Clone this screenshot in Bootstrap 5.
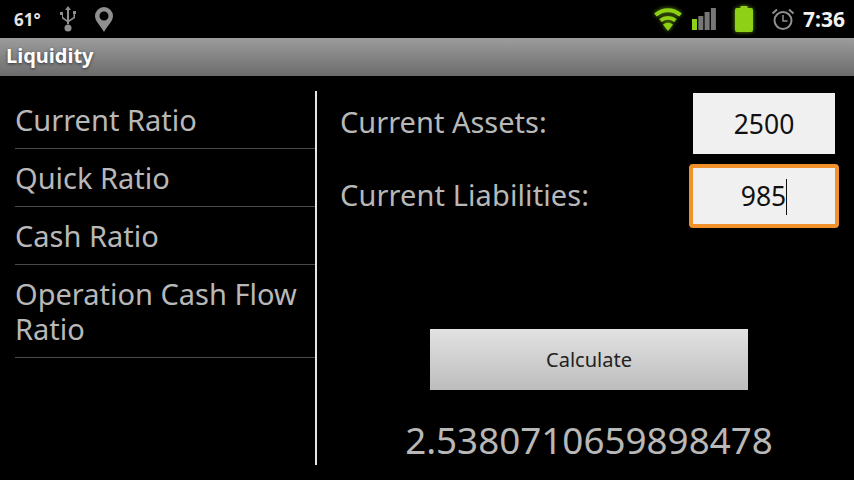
<!DOCTYPE html>
<html lang="en">
<head>
    <meta charset="UTF-8">
    <meta name="viewport" content="width=device-width, initial-scale=1.0">
    <title>Liquidity</title>
    <link href="https://cdn.jsdelivr.net/npm/bootstrap@5.3.0/dist/css/bootstrap.min.css" rel="stylesheet">
    <style>
        html, body { height: 480px; overflow: hidden; }
        body { background: #000; font-family: "Noto Sans", "Open Sans", sans-serif; color: #bdbdbd; }
        .status-strip { height: 38px; background: #000; padding: 0 9px 0 14px; }
        .temp-text { font-size: 17px; font-weight: 700; color: #e4e4e4; line-height: 1; width: 28px; }
        .clock-text { font-size: 21px; font-weight: 700; color: #f2f2f2; line-height: 1; }
        .glow-icon { filter: drop-shadow(0 0 2px rgba(142, 208, 22, .7)); }
        .signal-icon { margin: 0 3px 0 9px; }
        .batt-icon { margin: 0 18px 0 16px; }
        .title-strip { height: 38px; background: linear-gradient(#9c9c9c, #6c6c6c); padding-left: 6px; font-size: 20px; font-weight: 700; color: #fff; line-height: 36px; text-shadow: 0 1px 3px #333; }
        .app-body { height: 404px; padding: 15px 0 15px 15px; }
        .side-col { width: 300px; flex: none; }
        .side-item { font-size: 29px; line-height: 35px; padding: 11px 0 11px 0; border-bottom: 1px solid #4a4a4a; color: #b8b8b8; }
        .side-rule { width: 2px; flex: none; background: #e6e6e6; }
        .main-col { width: 537px; flex: none; }
        .form-line { padding-left: 23px; padding-right: 15px; }
        .first-line { margin-top: 2px; }
        .second-line { margin-top: 10px; }
        .form-lbl { font-size: 29px; color: #b8b8b8; line-height: 1; padding-bottom: 5px; }
        .second-line .form-lbl { padding-bottom: 3px; letter-spacing: .1px; }
        .num-box { width: 142px; height: 61px; margin-right: 4px; background: #f0f0f0; color: #111; font-size: 26.500px; border: 0; border-radius: 0; text-align: center; line-height: 63px; }
        .num-box.is-focus { width: 150px; height: 64px; margin-right: 0; border: 4px solid #f0912a; border-radius: 4px; line-height: 57px; }
        .caret-bar { display: inline-block; width: 1px; height: 36px; background: #111; vertical-align: middle; margin-top: -3px; }
        .calc-area { padding-left: 7px; padding-bottom: 6px; }
        .calc-btn { width: 318px; height: 61px; background: linear-gradient(#e2e2e2, #bdbdbd); color: #222; font-size: 20px; border: 0; border-radius: 0; padding: 0; }
        .calc-btn:hover { background: linear-gradient(#e2e2e2, #bdbdbd); color: #222; }
        .result-text { font-size: 36.800px; color: #b8b8b8; line-height: 1; margin-top: 32px; }
    </style>
</head>
<body>
    <!-- status bar -->
    <div class="status-strip d-flex align-items-center">
        <span class="temp-text me-3">61°</span>
        <svg class="me-3" width="20" height="26" viewBox="0 0 20 26"><g fill="#8f8f8f"><path d="M10 0l3 4h-2v14h-2V4H7z"/><circle cx="10" cy="22" r="3.5"/><path d="M2 6h3v3.5l0 1.5 4 3v2l-5-3.500V9H2zM15 5h3v3h-1v4l-6 4v-2l4.500-3V8H15z"/></g></svg>
        <svg width="20" height="26" viewBox="0 0 20 26"><path fill="#8f8f8f" fill-rule="evenodd" d="M10 1a9 9 0 0 1 9 9c0 5-5 9-9 16C6 19 1 15 1 10a9 9 0 0 1 9-9zm0 4.500a4.500 4.500 0 1 0 0 9 4.500 4.500 0 0 0 0-9z"/></svg>
        <div class="ms-auto d-flex align-items-center">
            <svg class="glow-icon" width="30" height="24" viewBox="0 0 30 24"><g fill="none" stroke="#8ed016" stroke-width="4"><path d="M2.500 8C10 1.500 20 1.500 27.500 8"/><path d="M7.500 13.500C12 10 18 10 22.500 13.500"/></g><path fill="#8ed016" d="M15 24l-5-6.500c3-2.500 7-2.500 10 0z"/></svg>
            <svg class="signal-icon" width="24" height="22" viewBox="0 0 24 22"><rect x="0" y="11" width="5" height="11" fill="#8ed016"/><rect x="6.300" y="8" width="5" height="14" fill="#777"/><rect x="12.600" y="4" width="5" height="18" fill="#777"/><rect x="18.900" y="0" width="5" height="22" fill="#777"/></svg>
            <svg class="glow-icon batt-icon" width="18" height="26" viewBox="0 0 18 26"><path fill="#8ed016" d="M5.500 0h7v2h3.500a2 2 0 0 1 2 2v20a2 2 0 0 1-2 2H2a2 2 0 0 1-2-2V4a2 2 0 0 1 2-2h3.500z"/></svg>
            <svg width="24" height="24" viewBox="0 0 24 24"><g fill="none" stroke="#8f8f8f"><circle cx="12" cy="13.500" r="8.500" stroke-width="2"/><path stroke-width="1.500" d="M12 8v6h4.500"/><path stroke-width="2" d="M1.500 6.500L6 2.500M22.500 6.500L18 2.500"/></g></svg>
            <span class="clock-text ms-2">7:36</span>
        </div>
    </div>

    <!-- title bar -->
    <div class="title-strip">Liquidity</div>

    <div class="app-body d-flex">
        <!-- ratio list -->
        <div class="side-col">
            <div class="side-item">Current Ratio</div>
            <div class="side-item">Quick Ratio</div>
            <div class="side-item">Cash Ratio</div>
            <div class="side-item">Operation Cash Flow Ratio</div>
        </div>
        <div class="side-rule"></div>

        <!-- calculator -->
        <div class="main-col d-flex flex-column">
            <div class="form-line first-line d-flex align-items-center justify-content-between">
                <span class="form-lbl">Current Assets:</span>
                <div class="num-box">2500</div>
            </div>
            <div class="form-line second-line d-flex align-items-center justify-content-between">
                <span class="form-lbl">Current Liabilities:</span>
                <div class="num-box is-focus">985<span class="caret-bar"></span></div>
            </div>
            <div class="calc-area text-center mt-auto">
                <button type="button" class="btn calc-btn">Calculate</button>
                <div class="result-text">2.5380710659898478</div>
            </div>
        </div>
    </div>

    <script src="https://cdn.jsdelivr.net/npm/bootstrap@5.3.0/dist/js/bootstrap.bundle.min.js"></script>
</body>
</html>
